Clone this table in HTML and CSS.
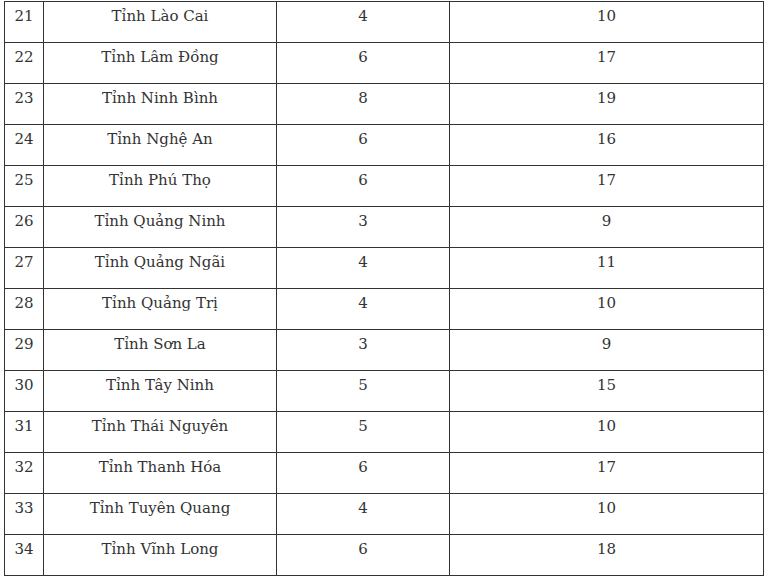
FILE: index.html
```html
<!DOCTYPE html>
<html lang="vi">
<head>
<meta charset="utf-8">
<link rel="stylesheet" href="styles.css">
</head>
<body>
<table class="grid">
<colgroup><col class="c1"><col class="c2"><col class="c3"><col class="c4"></colgroup>
<tbody>
<tr><td>21</td><td>Tỉnh Lào Cai</td><td>4</td><td>10</td></tr>
<tr><td>22</td><td>Tỉnh Lâm Đồng</td><td>6</td><td>17</td></tr>
<tr><td>23</td><td>Tỉnh Ninh Bình</td><td>8</td><td>19</td></tr>
<tr><td>24</td><td>Tỉnh Nghệ An</td><td>6</td><td>16</td></tr>
<tr><td>25</td><td>Tỉnh Phú Thọ</td><td>6</td><td>17</td></tr>
<tr><td>26</td><td>Tỉnh Quảng Ninh</td><td>3</td><td>9</td></tr>
<tr><td>27</td><td>Tỉnh Quảng Ngãi</td><td>4</td><td>11</td></tr>
<tr><td>28</td><td>Tỉnh Quảng Trị</td><td>4</td><td>10</td></tr>
<tr><td>29</td><td>Tỉnh Sơn La</td><td>3</td><td>9</td></tr>
<tr><td>30</td><td>Tỉnh Tây Ninh</td><td>5</td><td>15</td></tr>
<tr><td>31</td><td>Tỉnh Thái Nguyên</td><td>5</td><td>10</td></tr>
<tr><td>32</td><td>Tỉnh Thanh Hóa</td><td>6</td><td>17</td></tr>
<tr><td>33</td><td>Tỉnh Tuyên Quang</td><td>4</td><td>10</td></tr>
<tr><td>34</td><td>Tỉnh Vĩnh Long</td><td>6</td><td>18</td></tr>
</tbody>
</table>
</body>
</html>
```
FILE: styles.css
```css
html, body {
  margin: 0;
  padding: 0;
  background: #ffffff;
}
body {
  padding: 1px 0 0 4px;
  font-family: "DejaVu Serif", "Liberation Serif", serif;
  font-size: 15px;
  color: #333333;
}
.grid {
  border-collapse: collapse;
  table-layout: fixed;
  width: 759px;
}
.c1 { width: 39px; }
.c2 { width: 233px; }
.c3 { width: 173px; }
.c4 { width: 314px; }
.grid td {
  border: 1px solid #333333;
  text-align: center;
  vertical-align: top;
  padding: 2px 4px 14px;
  line-height: 24px;
  height: 24px;
}
```
